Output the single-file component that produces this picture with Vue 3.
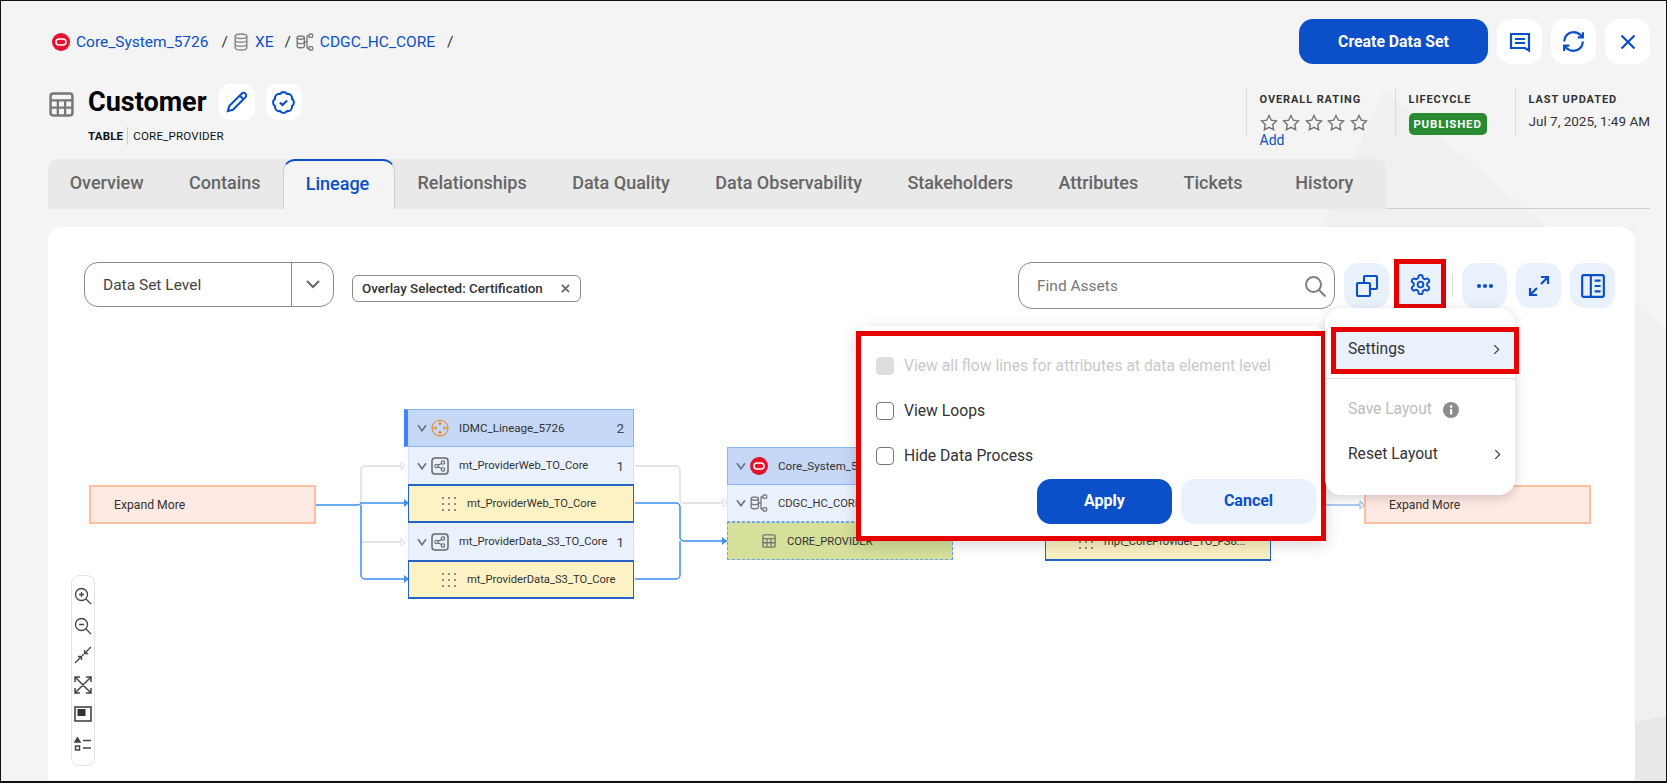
<template>
  <div class="page">
    <svg class="backdrop" viewBox="0 0 1667 783">
      <polygon points="1385,90 1667,330 1667,716 1635,722 1635,227 1322,227" fill="#f0f0f0" />
      <polygon points="1635,722 1667,716 1667,783 1635,783" fill="#e8e8e8" />
    </svg>

    <svg class="sprite" width="0" height="0">
      <symbol id="oracle" viewBox="0 0 18 18">
        <circle cx="9" cy="9" r="9" fill="#e8112d" />
        <rect x="4" y="6" width="10" height="6" rx="3" fill="none" stroke="#fff" stroke-width="1.6" />
      </symbol>
      <symbol id="schema" viewBox="0 0 18 18">
        <g fill="none" stroke="currentColor" stroke-width="1.4">
          <ellipse cx="4.8" cy="4.6" rx="3.6" ry="1.6" />
          <path d="M1.2 4.6v8.6c0 .9 1.6 1.6 3.6 1.6s3.6-.7 3.6-1.6V4.6M1.2 9c0 .9 1.6 1.6 3.6 1.6S8.4 9.900 8.400 9" />
          <path d="M8.400 9h2.600M11 2.800v12.400M11 2.800h2M11 15.200h2" />
          <rect x="13" y="1" width="3.600" height="3.400" rx=".8" />
          <rect x="13" y="13.600" width="3.600" height="3.400" rx=".8" />
        </g>
      </symbol>
      <symbol id="table" viewBox="0 0 24 24">
        <rect x="1.500" y="1.500" width="21" height="21" rx="2.500" fill="none" stroke="currentColor" stroke-width="2.400" />
        <path d="M1.500 8h21M1.500 15h21M8.500 8v14M15.500 8v14" fill="none" stroke="currentColor" stroke-width="2.200" />
      </symbol>
      <symbol id="mapping" viewBox="0 0 18 18">
        <rect x="1" y="1" width="16" height="16" rx="3" fill="none" stroke="currentColor" stroke-width="1.500" />
        <g fill="none" stroke="currentColor" stroke-width="1.100">
          <circle cx="5.500" cy="9" r="1.700" />
          <circle cx="12" cy="5.600" r="1.700" />
          <circle cx="12" cy="12.400" r="1.700" />
          <path d="M7 8.200l3.500-1.800M7 9.800l3.500 1.800" />
        </g>
      </symbol>
      <symbol id="dots" viewBox="0 0 14 16">
        <g fill="#777">
          <circle v-for="d in dotGrid" :key="d.id" :cx="d.x" :cy="d.y" r="1.050" />
        </g>
      </symbol>
      <symbol id="chev" viewBox="0 0 10 8">
        <path d="M1 1.200L5 6.800L9 1.200" fill="none" stroke="#6b7280" stroke-width="1.600" />
      </symbol>
    </svg>

    <header class="top">
      <nav class="crumbs">
        <svg class="crumb-icon"><use href="#oracle" /></svg>
        <a class="crumb-link">Core_System_5726</a>
        <span class="slash first">/</span>
        <svg class="db-icon" viewBox="0 0 14 18" fill="none" stroke="#8a8a8a" stroke-width="1.500">
          <ellipse cx="7" cy="3.200" rx="5.800" ry="2.300" />
          <path d="M1.200 3.200v11.600c0 1.300 2.600 2.300 5.800 2.300s5.800-1 5.800-2.300V3.200M1.200 7c0 1.300 2.600 2.300 5.800 2.300s5.800-1 5.800-2.300M1.200 11c0 1.300 2.600 2.300 5.800 2.300s5.800-1 5.800-2.300" />
        </svg>
        <a class="crumb-link">XE</a>
        <span class="slash second">/</span>
        <svg class="crumb-icon schema-gray"><use href="#schema" /></svg>
        <a class="crumb-link">CDGC_HC_CORE</a>
        <span class="slash third">/</span>
      </nav>
      <div class="top-actions">
        <button class="create-btn">Create Data Set</button>
        <button class="white-btn">
          <svg viewBox="0 0 24 24" width="24" height="24" fill="none" stroke="#0b50c8" stroke-width="2.200">
            <path d="M3 4h18v16.500l-4-2.500H3zM7 9h10M7 13h10" />
          </svg>
        </button>
        <button class="white-btn">
          <svg viewBox="0 0 24 24" width="25" height="25" fill="none" stroke="#0b50c8" stroke-width="2.100">
            <path d="M3 12a9 9 0 0 1 9-9 9.750 9.750 0 0 1 6.740 2.740L21 8M21 3v5h-5M21 12a9 9 0 0 1-9 9 9.750 9.750 0 0 1-6.740-2.740L3 16M8 16H3v5" />
          </svg>
        </button>
        <button class="white-btn">
          <svg viewBox="0 0 24 24" width="26" height="26" fill="none" stroke="#0b50c8" stroke-width="2.100">
            <path d="M6 6l12 12M18 6L6 18" />
          </svg>
        </button>
      </div>
    </header>

    <section class="title-row">
      <div class="title-block">
        <svg class="title-icon"><use href="#table" /></svg>
        <div>
          <div class="title-line">
            <h1>Customer</h1>
            <button class="square-btn">
              <svg viewBox="0 0 24 24" width="22" height="22" fill="none" stroke="#0b50c8" stroke-width="2.200">
                <path d="M17 3a2.850 2.830 0 1 1 4 4L7.500 20.500 2 22l1.500-5.500ZM15 5l4 4" />
              </svg>
            </button>
            <button class="square-btn">
              <svg viewBox="0 0 24 24" width="25" height="25" fill="none" stroke="#0b50c8" stroke-width="2">
                <path d="M3.850 8.620a4 4 0 0 1 4.780-4.770 4 4 0 0 1 6.740 0 4 4 0 0 1 4.780 4.780 4 4 0 0 1 0 6.740 4 4 0 0 1-4.770 4.780 4 4 0 0 1-6.750 0 4 4 0 0 1-4.780-4.770 4 4 0 0 1 0-6.760ZM8.500 12l2.500 2.500 4.500-4.500" />
              </svg>
            </button>
          </div>
          <div class="subtitle"><b>TABLE</b><span>CORE_PROVIDER</span></div>
        </div>
      </div>

      <div class="meta">
        <div class="meta-col rating">
          <label>OVERALL RATING</label>
          <div class="stars">
            <svg v-for="n in 5" :key="n" viewBox="0 0 24 24" width="18" height="18" fill="none" stroke="#6f6f6f" stroke-width="1.800">
              <polygon points="12 2 15.090 8.260 22 9.270 17 14.140 18.180 21.020 12 17.770 5.820 21.020 7 14.140 2 9.270 8.910 8.260 12 2" />
            </svg>
          </div>
          <a class="add">Add</a>
        </div>
        <div class="meta-col lifecycle">
          <label>LIFECYCLE</label>
          <span class="badge">PUBLISHED</span>
        </div>
        <div class="meta-col updated">
          <label>LAST UPDATED</label>
          <span class="date">Jul 7, 2025, 1:49 AM</span>
        </div>
      </div>
    </section>

    <div class="tabs-line">
      <div class="tabs">
        <div v-for="tab in tabs" :key="tab" class="tab" :class="{ active: tab === 'Lineage', wide: tab === 'Tickets', last: tab === 'History' }">{{ tab }}</div>
      </div>
    </div>

    <main class="card">
      <div class="toolbar">
        <div class="select">
          <span class="select-text">Data Set Level</span>
          <span class="select-arrow">
            <svg viewBox="0 0 14 9" width="14" height="9" fill="none" stroke="#666" stroke-width="2"><path d="M1 1l6 6 6-6" /></svg>
          </span>
        </div>
        <div class="chip">
          <span>Overlay Selected: Certification</span>
          <svg viewBox="0 0 10 10" width="9" height="9" fill="none" stroke="#666" stroke-width="1.900"><path d="M1 1l8 8M9 1l-8 8" /></svg>
        </div>

        <div class="tools">
          <div class="search">
            <span>Find Assets</span>
            <svg viewBox="0 0 24 24" width="24" height="24" fill="none" stroke="#808080" stroke-width="2"><circle cx="10.500" cy="10.500" r="7.500" /><path d="M16 16l6.500 6.500" /></svg>
          </div>
          <button class="tool-btn">
            <svg viewBox="0 0 24 24" width="24" height="24" fill="none" stroke="#0b50c8" stroke-width="2.100">
              <rect x="2" y="9" width="13" height="13" rx="1" />
              <path d="M9 9V3a1 1 0 0 1 1-1h11a1 1 0 0 1 1 1v11a1 1 0 0 1-1 1h-6" />
            </svg>
          </button>
          <button class="tool-btn gear">
            <svg viewBox="0 0 24 24" width="23" height="23" fill="none" stroke="#0b50c8" stroke-width="2">
              <path d="M12.220 2h-.44a2 2 0 0 0-2 2v.18a2 2 0 0 1-1 1.730l-.43.250a2 2 0 0 1-2 0l-.15-.08a2 2 0 0 0-2.730.730l-.22.380a2 2 0 0 0 .730 2.730l.15.100a2 2 0 0 1 1 1.720v.510a2 2 0 0 1-1 1.740l-.15.090a2 2 0 0 0-.730 2.730l.22.380a2 2 0 0 0 2.730.730l.15-.08a2 2 0 0 1 2 0l.43.250a2 2 0 0 1 1 1.730V20a2 2 0 0 0 2 2h.44a2 2 0 0 0 2-2v-.18a2 2 0 0 1 1-1.730l.43-.25a2 2 0 0 1 2 0l.15.080a2 2 0 0 0 2.730-.730l.22-.390a2 2 0 0 0-.730-2.730l-.15-.08a2 2 0 0 1-1-1.740v-.5a2 2 0 0 1 1-1.740l.15-.09a2 2 0 0 0 .730-2.730l-.22-.38a2 2 0 0 0-2.730-.73l-.15.08a2 2 0 0 1-2 0l-.43-.25a2 2 0 0 1-1-1.730V4a2 2 0 0 0-2-2z" />
              <circle cx="12" cy="12" r="3" />
            </svg>
          </button>
          <span class="tool-sep"></span>
          <button class="tool-btn">
            <svg viewBox="0 0 24 24" width="24" height="24" fill="#0b50c8"><circle cx="6" cy="12" r="2.100" /><circle cx="12" cy="12" r="2.100" /><circle cx="18" cy="12" r="2.100" /></svg>
          </button>
          <button class="tool-btn">
            <svg viewBox="0 0 24 24" width="24" height="24" fill="none" stroke="#0b50c8" stroke-width="2.200"><path d="M14 3h7v7M21 3l-7 7M10 21H3v-7M3 21l7-7" /></svg>
          </button>
          <button class="tool-btn">
            <svg viewBox="0 0 24 24" width="26" height="26" fill="none" stroke="#0b50c8" stroke-width="2"><rect x="2" y="2" width="20" height="20" rx="1.500" /><path d="M10 2v20M13.500 7H19M13.500 12H19M13.500 17H19" /></svg>
          </button>
        </div>
      </div>

      <div class="canvas">
        <svg class="edges" viewBox="48 320 1587 460">
          <g fill="none" stroke="#dcdcdc" stroke-width="1.400">
            <path d="M361 505V470a4 4 0 0 1 4-4h36" />
            <path d="M361 542h40" />
            <path d="M635 466h41a4 4 0 0 1 4 4v29a4 4 0 0 0 4 4h39" />
          </g>
          <g fill="none" stroke="#3d8ff0" stroke-width="1.500">
            <path d="M315 505h42a4 4 0 0 0 4-2h44" />
            <path d="M361 505v70a4 4 0 0 0 4 4h40" />
            <path d="M635 503h41a4 4 0 0 1 4 4v30a4 4 0 0 0 4 4h43M635 579h41a4 4 0 0 0 4-4v-34" />
          </g>
          <path d="M1326 505h36" fill="none" stroke="#8fb9ef" stroke-width="1.500" />
          <polygon points="401,462 405,466 401,470" fill="#fff" stroke="#dcdcdc" />
          <polygon points="401,538 405,542 401,546" fill="#fff" stroke="#dcdcdc" />
          <polygon points="723,499 727,503 723,507" fill="#fff" stroke="#dcdcdc" />
          <polygon points="404,499 409,503 404,507" fill="#3d8ff0" />
          <polygon points="404,575 409,579 404,583" fill="#3d8ff0" />
          <polygon points="722,537 727,541 722,545" fill="#3d8ff0" />
          <polygon points="1360,501 1364,505 1360,509" fill="#fff" stroke="#8fb9ef" />
        </svg>

        <div class="expand left-expand">Expand More</div>
        <div class="expand right-expand">Expand More</div>

        <div class="node lineage-node">
          <div class="row head">
            <svg class="chev"><use href="#chev" /></svg>
            <svg class="node-icon" viewBox="0 0 18 18" fill="none" stroke="#f08a24" stroke-width="1.100">
              <circle cx="9" cy="9" r="8" />
              <path d="M9 1v4M9 13v4M1 9h4M13 9h4M7.600 4.200L9 5.600l1.400-1.400M7.600 13.800L9 12.400l1.400 1.400M4.200 7.600L5.600 9l-1.400 1.400M13.800 7.600L12.400 9l1.400 1.400" />
            </svg>
            <span class="name">IDMC_Lineage_5726</span>
            <span class="count">2</span>
          </div>
          <template v-for="m in mappings" :key="m">
            <div class="row sub">
              <svg class="chev"><use href="#chev" /></svg>
              <svg class="node-icon mapping-icon"><use href="#mapping" /></svg>
              <span class="name">{{ m }}</span>
              <span class="count">1</span>
            </div>
            <div class="row item">
              <svg class="dots"><use href="#dots" /></svg>
              <span class="name">{{ m }}</span>
            </div>
          </template>
        </div>

        <div class="node core-node">
          <div class="row head">
            <svg class="chev"><use href="#chev" /></svg>
            <svg class="node-icon"><use href="#oracle" /></svg>
            <span class="name">Core_System_5726</span>
          </div>
          <div class="row sub">
            <svg class="chev"><use href="#chev" /></svg>
            <svg class="node-icon schema-gray"><use href="#schema" /></svg>
            <span class="name">CDGC_HC_CORE</span>
          </div>
          <div class="row dataset">
            <svg class="table-small"><use href="#table" /></svg>
            <span class="name">CORE_PROVIDER</span>
          </div>
        </div>

        <div class="node target-node">
          <div class="row item">
            <svg class="dots"><use href="#dots" /></svg>
            <span class="name">mpt_CoreProvider_TO_FS8...</span>
          </div>
        </div>

        <div class="zoom-bar">
          <svg viewBox="0 0 18 18" fill="none" stroke="#444" stroke-width="1.300"><circle cx="7.500" cy="7.500" r="6" /><path d="M12 12l5 5M5 7.500h5M7.500 5v5" /></svg>
          <svg viewBox="0 0 18 18" fill="none" stroke="#444" stroke-width="1.300"><circle cx="7.500" cy="7.500" r="6" /><path d="M12 12l5 5M5 7.500h5" /></svg>
          <svg viewBox="0 0 18 18" fill="none" stroke="#444" stroke-width="1.300"><path d="M1 17l6.500-6.500M4 10.500h3.500V14M17 1l-6.500 6.500M14 7.500h-3.500V4" /><circle cx="9" cy="9" r=".9" fill="#444" stroke="none" /></svg>
          <svg viewBox="0 0 18 18" fill="none" stroke="#444" stroke-width="1.500"><path d="M1 1l16 16M17 1L1 17M1 6V1h5M12 1h5v5M1 12v5h5M17 12v5h-5" /></svg>
          <svg viewBox="0 0 18 18"><rect x="1" y="2" width="16" height="14" fill="none" stroke="#444" stroke-width="1.600" /><rect x="3.500" y="4" width="8" height="7" fill="#333" /></svg>
          <svg viewBox="0 0 18 18" fill="none" stroke="#444" stroke-width="1.500"><path d="M1 7l2.500-4L6 7z" fill="#444" /><rect x="1.500" y="11" width="4" height="4" /><path d="M9 5.500h8M9 13h8" /></svg>
        </div>
      </div>

      <div class="panel">
        <div class="panel-mark">
          <label class="check disabled"><span class="box"></span>View all flow lines for attributes at data element level</label>
          <label class="check"><span class="box"></span>View Loops</label>
          <label class="check"><span class="box"></span>Hide Data Process</label>
          <div class="panel-actions">
            <button class="apply">Apply</button>
            <button class="cancel">Cancel</button>
          </div>
        </div>
      </div>

      <div class="menu">
        <div class="menu-row settings">
          <span>Settings</span>
          <svg viewBox="0 0 8 12" width="7" height="11" fill="none" stroke="#333" stroke-width="1.300"><path d="M1.500 1l5 5-5 5" /></svg>
        </div>
        <div class="menu-line"></div>
        <div class="menu-row muted">
          <span>Save Layout</span>
          <svg class="info" viewBox="0 0 16 16" width="16" height="16"><circle cx="8" cy="8" r="8" fill="#8c8c8c" /><rect x="7" y="7" width="2.200" height="5.500" fill="#fff" /><circle cx="8.100" cy="4.600" r="1.300" fill="#fff" /></svg>
        </div>
        <div class="menu-row">
          <span>Reset Layout</span>
          <svg viewBox="0 0 8 12" width="7" height="11" fill="none" stroke="#333" stroke-width="1.300"><path d="M1.500 1l5 5-5 5" /></svg>
        </div>
      </div>
    </main>
  </div>
</template>

<script setup>
const tabs = ['Overview', 'Contains', 'Lineage', 'Relationships', 'Data Quality', 'Data Observability', 'Stakeholders', 'Attributes', 'Tickets', 'History']
const mappings = ['mt_ProviderWeb_TO_Core', 'mt_ProviderData_S3_TO_Core']

const dotGrid = []
for (let r = 0; r < 3; r++) {
  for (let c = 0; c < 3; c++) {
    dotGrid.push({ id: `${r}-${c}`, x: 1 + c * 6, y: 2 + r * 6 })
  }
}
</script>

<style>
html, body {
  margin: 0;
  padding: 0;
}
</style>

<style scoped>
.page {
  position: relative;
  width: 1667px;
  height: 783px;
  overflow: hidden;
  background: #f4f4f4;
  font-family: Roboto, "Liberation Sans", sans-serif;
  color: #222;
}

.page::after {
  content: "";
  position: absolute;
  inset: 0;
  border: solid #111;
  border-width: 1px 1px 2px 1px;
  pointer-events: none;
  z-index: 20;
}

.backdrop {
  position: absolute;
  inset: 0;
  width: 1667px;
  height: 783px;
}

.sprite {
  position: absolute;
}

button {
  font-family: inherit;
  border: none;
  padding: 0;
  display: flex;
  align-items: center;
  justify-content: center;
}

.top {
  position: relative;
  display: flex;
  align-items: center;
  justify-content: space-between;
  height: 45px;
  padding: 19px 17px 0 52px;
}

.crumbs {
  display: flex;
  align-items: center;
  color: #0b50c8;
  font-size: 15.500px;
}

.crumb-icon {
  width: 18px;
  height: 18px;
  margin-right: 6px;
  flex: none;
}

.schema-gray {
  color: #7d7d7d;
}

.db-icon {
  width: 14px;
  height: 18px;
  margin-right: 7px;
  flex: none;
}

.slash {
  color: #333;
}

.slash.first {
  margin: 0 6px 0 13px;
}

.slash.second {
  margin: 0 5px 0 11px;
}

.slash.third {
  margin-left: 12px;
}

.top-actions {
  display: flex;
  gap: 9px;
}

.create-btn {
  width: 189px;
  height: 45px;
  border-radius: 14px;
  background: #0b50c8;
  color: #fff;
  font-size: 15.800px;
  font-weight: 700;
}

.white-btn {
  width: 45px;
  height: 45px;
  border-radius: 14px;
  background: #fff;
}

.title-row {
  position: relative;
  display: flex;
  justify-content: space-between;
  height: 75px;
  margin-top: 20px;
  padding: 0 17px 0 49px;
}

.title-block {
  display: flex;
}

.title-icon {
  width: 25px;
  height: 25px;
  margin: 8px 14px 0 0;
  color: #777;
}

.title-line {
  display: flex;
  align-items: center;
  height: 36px;
}

h1 {
  margin: 0 12px 0 0;
  font-size: 27px;
  font-weight: 700;
  color: #000;
}

.square-btn {
  width: 36px;
  height: 36px;
  border-radius: 11px;
  background: #fff;
  margin-right: 11px;
}

.subtitle {
  display: flex;
  align-items: center;
  margin-top: 7px;
  font-size: 11.500px;
  color: #111;
}

.subtitle b {
  padding-right: 4px;
  border-right: 1px solid #ccc;
  line-height: 18px;
  letter-spacing: .2px;
}

.subtitle span {
  padding-left: 5px;
  letter-spacing: .2px;
}

.meta {
  display: flex;
  height: 48px;
  margin-top: 4px;
}

.meta-col {
  border-left: 1px solid #dcdcdc;
  padding: 4px 0 0 13px;
  display: flex;
  flex-direction: column;
  align-items: flex-start;
}

.meta-col label {
  font-size: 11px;
  font-weight: 700;
  letter-spacing: .9px;
  color: #333;
  line-height: 16px;
}

.rating {
  width: 135px;
}

.lifecycle {
  width: 106px;
}

.stars {
  display: flex;
  gap: 4.500px;
  margin-top: 6px;
}

.add {
  color: #0b50c8;
  font-size: 14px;
  line-height: 16px;
}

.badge {
  margin-top: 5px;
  width: 78px;
  height: 22px;
  line-height: 22px;
  text-align: center;
  border-radius: 5px;
  background: #2a8a2f;
  color: #fff;
  font-size: 11.500px;
  font-weight: 700;
  letter-spacing: .8px;
}

.date {
  margin-top: 5px;
  font-size: 13.500px;
  color: #333;
  white-space: nowrap;
}

.tabs-line {
  position: relative;
  height: 50px;
  margin: 0 17px 0 48px;
  box-sizing: border-box;
  border-bottom: 1px solid #cfcfcf;
}

.tabs {
  display: inline-flex;
  height: 50px;
  background: #e9e9e9;
  border-radius: 10px 10px 0 0;
  box-sizing: border-box;
}

.tab {
  display: flex;
  align-items: center;
  padding: 0 22.700px 2px;
  font-size: 18px;
  font-weight: 500;
  color: #666;
  white-space: nowrap;
  box-sizing: border-box;
  height: 49px;
}

.tab:first-child {
  padding-left: 21.700px;
}

.tab.wide {
  padding-right: 30px;
}

.tab.last {
  padding-right: 33px;
}

.tab.active {
  height: 50px;
  padding: 0 24.500px 4px 21.500px;
  color: #0b50c8;
  background: #f4f4f4;
  border: 1px solid #cfcfcf;
  border-top: 2px solid #0b50c8;
  border-bottom: none;
  border-radius: 12px 12px 0 0;
}

.card {
  position: relative;
  width: 1587px;
  height: 553px;
  margin: 18px 0 0 48px;
  background: #fff;
  border-radius: 14px 14px 0 0;
}

.toolbar {
  display: flex;
  align-items: flex-start;
  padding: 35px 20px 0 36px;
}

.select {
  display: flex;
  width: 250px;
  height: 45px;
  box-sizing: border-box;
  border: 1px solid #8a8a8a;
  border-radius: 14px;
}

.select-text {
  flex: 1;
  padding: 1px 0 0 18px;
  line-height: 43px;
  font-size: 15.500px;
  color: #444;
}

.select-arrow {
  width: 41px;
  border-left: 1px solid #8a8a8a;
  display: flex;
  align-items: center;
  justify-content: center;
}

.chip {
  display: flex;
  align-items: center;
  justify-content: space-between;
  width: 229px;
  height: 27px;
  box-sizing: border-box;
  margin: 13px 0 0 18px;
  padding: 0 10px 0 9px;
  border: 1px solid #8a8a8a;
  border-radius: 6px;
  font-size: 13.400px;
  font-weight: 500;
  color: #333;
}

.tools {
  display: flex;
  margin-left: auto;
}

.search {
  display: flex;
  align-items: center;
  justify-content: space-between;
  width: 317px;
  height: 47px;
  box-sizing: border-box;
  margin-right: 9px;
  padding: 0 7px 0 18px;
  border: 1px solid #8a8a8a;
  border-radius: 14px;
  font-size: 15.500px;
  color: #777;
}

.tool-btn {
  width: 45px;
  height: 45px;
  margin-top: 1px;
  border-radius: 14px;
  background: #e9f1fd;
}

.tools .tool-btn + .tool-btn {
  margin-left: 9px;
}

.tools .tool-btn.gear {
  width: 52px;
  height: 50px;
  margin: -3px 0 0 5px;
  box-sizing: border-box;
  border: 5px solid #e60000;
  border-radius: 0;
}

.tool-sep {
  width: 1px;
  height: 24px;
  margin: 11px 9px 0 6px;
  background: #dcdcdc;
}

.canvas {
  position: absolute;
  left: 0;
  top: 93px;
  width: 1587px;
  height: 460px;
}

.edges {
  position: absolute;
  inset: 0;
  width: 1587px;
  height: 460px;
}

.expand {
  position: absolute;
  width: 227px;
  height: 39px;
  box-sizing: border-box;
  display: flex;
  align-items: center;
  padding-left: 23px;
  background: #ffe9e3;
  border: 2px solid #fdbf9e;
  font-size: 12.200px;
  color: #333;
}

.left-expand {
  left: 41px;
  top: 165px;
}

.right-expand {
  left: 1316px;
  top: 165px;
}

.node {
  position: absolute;
  box-sizing: border-box;
}

.lineage-node {
  left: 360px;
  top: 89px;
  width: 226px;
}

.core-node {
  left: 679px;
  top: 127px;
  width: 226px;
}

.target-node {
  left: 997px;
  top: 202px;
  width: 226px;
}

.row {
  display: flex;
  align-items: center;
  box-sizing: border-box;
  font-size: 11.200px;
  color: #333;
}

.row .name {
  white-space: nowrap;
}

.count {
  margin-left: auto;
  padding-right: 9px;
  font-size: 13.500px;
  color: #444;
}

.row.head {
  height: 38px;
  padding-left: 8px;
  font-size: 11.600px;
  background: #c5d8f8;
  border: 1px solid #8ab4f8;
}

.lineage-node .row.head {
  margin-left: -4px;
  padding-left: 9px;
  border-left: 4px solid #3f83f8;
}

.row.sub {
  height: 37px;
  padding-left: 8px;
  background: #e9f1fd;
  border: solid #d6e4fb;
  border-width: 0 1px;
}

.row.item {
  height: 39px;
  padding-left: 33px;
  background: #fdf2c4;
  border: solid #2563c8;
  border-width: 2px 1px;
}

.chev {
  width: 10px;
  height: 8px;
  flex: none;
  margin-right: 4px;
}

.node-icon {
  width: 18px;
  height: 18px;
  flex: none;
  margin-right: 10px;
}

.mapping-icon {
  color: #666;
}

.dots {
  width: 14px;
  height: 16px;
  flex: none;
  margin-right: 11px;
}

.row.dataset {
  height: 38px;
  padding-left: 34px;
  background: #d6e09b;
  border: 1px dashed #6aa5f2;
}

.table-small {
  width: 14px;
  height: 14px;
  color: #777;
  margin-right: 11px;
  flex: none;
}

.core-node .row.sub {
  border-bottom: 1px dashed #6aa5f2;
}

.zoom-bar {
  position: absolute;
  left: 22.500px;
  top: 255px;
  width: 24px;
  height: 191px;
  box-sizing: border-box;
  border: 1px solid #e3e3e3;
  border-radius: 8px;
  padding: 11px 0 0;
  display: flex;
  flex-direction: column;
  align-items: center;
  gap: 11.500px;
}

.zoom-bar svg {
  width: 18px;
  height: 18px;
  flex: none;
}

.panel {
  position: absolute;
  left: 808px;
  top: 99px;
  width: 470px;
  height: 215px;
  box-sizing: border-box;
  padding-top: 5px;
  background: #fff;
  border-radius: 12px 12px 0 0;
  box-shadow: 0 4px 16px rgba(0, 0, 0, .16);
  z-index: 5;
}

.panel-mark {
  height: 210px;
  box-sizing: border-box;
  padding: 7px 5px 0 15px;
  border: 5px solid #e60000;
}

.check {
  display: flex;
  align-items: center;
  height: 45px;
  font-size: 15.700px;
  color: #333;
}

.box {
  width: 18px;
  height: 18px;
  box-sizing: border-box;
  margin-right: 10px;
  border: 1px solid #777;
  border-radius: 4px;
  background: #fff;
}

.check.disabled {
  color: #c9c9c9;
}

.check.disabled .box {
  background: #dedede;
  border-color: #dedede;
}

.panel-actions {
  display: flex;
  justify-content: flex-end;
  gap: 9px;
  margin-top: 1px;
}

.panel-actions button {
  width: 135px;
  height: 45px;
  border-radius: 14px;
  padding-bottom: 2px;
  font-size: 16px;
  font-weight: 700;
}

.apply {
  background: #0b50c8;
  color: #fff;
}

.cancel {
  background: #e9f1fd;
  color: #0b50c8;
}

.menu {
  position: absolute;
  left: 1277px;
  top: 81px;
  width: 190px;
  height: 187px;
  box-sizing: border-box;
  padding-top: 19px;
  background: #fff;
  border-radius: 16px;
  box-shadow: 0 3px 12px rgba(0, 0, 0, .18);
  z-index: 6;
}

.menu-row {
  display: flex;
  align-items: center;
  justify-content: space-between;
  height: 45px;
  box-sizing: border-box;
  padding: 0 14px 3px 23px;
  font-size: 15.600px;
  color: #333;
}

.menu-row svg {
  margin-top: 1px;
}

.menu-row.settings {
  width: 188px;
  height: 47px;
  margin-left: 6px;
  padding: 0 14px 3px 12px;
  border: 5px solid #e60000;
  background: #e9f1fd;
}

.menu-line {
  height: 1px;
  margin: 4px 0 9px;
  background: #e3e3e3;
}

.menu-row.muted {
  justify-content: flex-start;
  color: #bdbdbd;
}

.info {
  margin-left: 11px;
}
</style>
